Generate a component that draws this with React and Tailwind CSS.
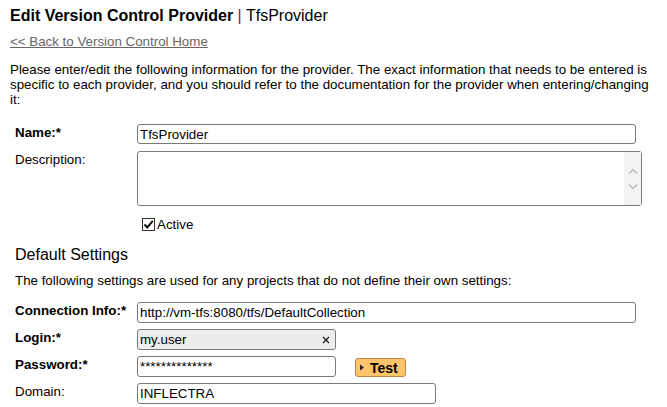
import React from 'react';

function Label({ children, required }) {
  return (
    <div className={`w-[122px] shrink-0 pt-[1px] ${required ? 'font-bold' : ''}`}>
      {children}
      {required && <span>*</span>}
    </div>
  );
}

function TextBox({ value, width, gray }) {
  return (
    <input
      readOnly
      defaultValue={value}
      className={`h-[21px] ${width} border border-[#7a7a7a] rounded-[3px] px-[2px] text-[13.33px] text-black outline-none ${
        gray ? 'bg-[#ededed]' : 'bg-white'
      }`}
    />
  );
}

export default function App() {
  return (
    <div className="min-h-screen bg-white px-[10px] pt-[6px] font-['Liberation_Sans',Arial,sans-serif] text-[13.33px] leading-[15px] text-black">
      {/* Header */}
      <h1 className="text-[16px] leading-[20px]">
        <span className="font-bold">Edit Version Control Provider</span>
        <span className="text-[#7b1c2c]"> | </span>
        <span>TfsProvider</span>
      </h1>
      <a href="#" className="mt-[8px] inline-block text-[#666666] underline">
        &lt;&lt; Back to Version Control Home
      </a>
      <p className="mt-[13px] pr-[4px]">
        Please enter/edit the following information for the provider. The exact information that needs to be entered is
        specific to each provider, and you should refer to the documentation for the provider when entering/changing
        it:
      </p>

      <div className="pl-[5px]">
        {/* Provider */}
        <div className="mt-[17px] flex">
          <Label required>Name:</Label>
          <input
            readOnly
            defaultValue="TfsProvider"
            className="h-[20px] w-[499px] border border-[#7a7a7a] rounded-[3px] px-[2px] text-[13.33px] outline-none"
          />
        </div>
        <div className="mt-[7px] flex">
          <Label>Description:</Label>
          <div className="relative h-[55px] w-[505px] border border-[#7a7a7a] rounded-[3px] bg-white">
            <div className="absolute right-0 top-0 bottom-0 w-[17px] bg-[#f3f3f3] flex flex-col items-center justify-center gap-[10px]">
              <svg width="10" height="6" viewBox="0 0 10 6">
                <path d="M1 5.5 L5 1.5 L9 5.5" fill="none" stroke="#bdbdbd" strokeWidth="1.5" />
              </svg>
              <svg width="10" height="6" viewBox="0 0 10 6">
                <path d="M1 0.5 L5 4.5 L9 0.5" fill="none" stroke="#bdbdbd" strokeWidth="1.5" />
              </svg>
            </div>
          </div>
        </div>
        <div className="mt-[11px] flex items-center pl-[127px]">
          <span className="flex h-[13px] w-[13px] items-center justify-center border border-[#333] bg-white">
            <svg width="11" height="11" viewBox="0 0 11 11">
              <path d="M1.5 5.5 L4.3 8.5 L9.8 1.8" fill="none" stroke="#111" strokeWidth="2" />
            </svg>
          </span>
          <span className="ml-[2px]">Active</span>
        </div>

        {/* Default Settings */}
        <h2 className="mt-[13px] text-[16px] leading-[20px]">Default Settings</h2>
        <p className="mt-[8px]">The following settings are used for any projects that do not define their own settings:</p>

        <div className="mt-[14px] flex">
          <Label required>Connection Info:</Label>
          <TextBox value="http://vm-tfs:8080/tfs/DefaultCollection" width="w-[499px]" />
        </div>
        <div className="mt-[6px] flex">
          <Label required>Login:</Label>
          <div className="relative">
            <TextBox value="my.user" width="w-[199px]" gray />
            <svg className="absolute right-[6px] top-[7px]" width="8" height="8" viewBox="0 0 8 8">
              <path d="M1 1 L7 7 M7 1 L1 7" stroke="#222" strokeWidth="1.4" />
            </svg>
          </div>
        </div>
        <div className="mt-[6px] flex items-start">
          <Label required>Password:</Label>
          <TextBox value="**************" width="w-[199px]" />
          <button className="ml-[19px] mt-[2px] flex h-[19px] w-[51px] items-center rounded-[3px] border border-[#b8864c] bg-[#fdc46b] pl-[3px] text-[14px] font-bold leading-none">
            <svg width="6" height="7" viewBox="0 0 6 7">
              <path d="M1 0.5 L5 3.5 L1 6.5 Z" fill="#222" />
            </svg>
            <span className="ml-[5px]">Test</span>
          </button>
        </div>
        <div className="mt-[6px] flex">
          <Label>Domain:</Label>
          <TextBox value="INFLECTRA" width="w-[299px]" />
        </div>
      </div>
    </div>
  );
}
